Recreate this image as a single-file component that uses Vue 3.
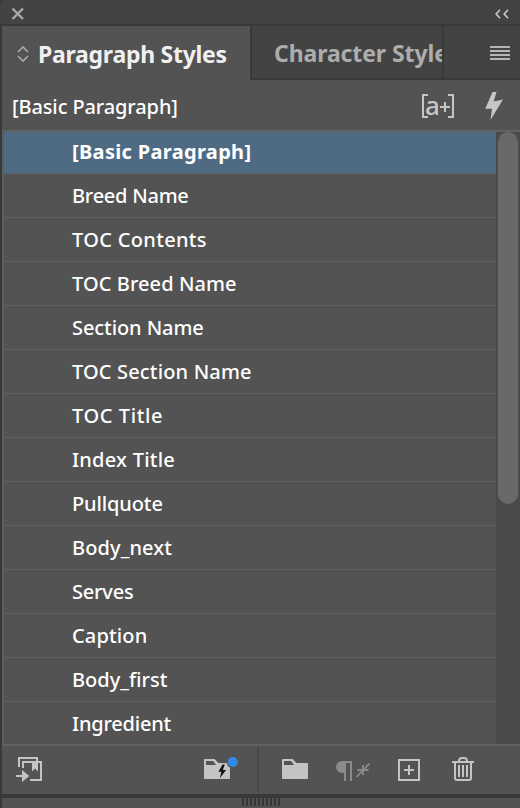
<script setup>
// Style names with their letter tracking in pixels
const styles = [
  { name: '[Basic Paragraph]', tracking: 0.33 },
  { name: 'Breed Name', tracking: -0.25 },
  { name: 'TOC Contents', tracking: 0.33 },
  { name: 'TOC Breed Name', tracking: 0.08 },
  { name: 'Section Name', tracking: -0.08 },
  { name: 'TOC Section Name', tracking: 0.16 },
  { name: 'TOC Title', tracking: 0.6 },
  { name: 'Index Title', tracking: 0.25 },
  { name: 'Pullquote', tracking: -0.12 },
  { name: 'Body_next', tracking: 0.1 },
  { name: 'Serves', tracking: -0.2 },
  { name: 'Caption', tracking: 0.15 },
  { name: 'Body_first', tracking: 0 },
  { name: 'Ingredient', tracking: -0.2 },
]
</script>

<template>
  <main class="panel">
    <header class="titlebar">
      <svg width="14" height="14" viewBox="0 0 14 14"><path d="M1.5 1.5 12 12M12 1.5 1.5 12" stroke="#aaa" stroke-width="2.4" fill="none" /></svg>
      <svg width="14" height="10" viewBox="0 0 14 10"><path d="M5 .8 1.2 5 5 9.2M13 .8 9.2 5 13 9.2" stroke="#c4c4c4" stroke-width="1.7" fill="none" /></svg>
    </header>
    <nav class="tabs">
      <div class="tab active">
        <svg class="cycle" width="12" height="18" viewBox="0 0 12 18"><path d="M1 7 6 2l5 5M1 11l5 5 5-5" stroke="#a9a9a9" stroke-width="1.6" fill="none" /></svg>
        <span>Paragraph Styles</span>
      </div>
      <div class="tab inactive"><span>Character Styles</span></div>
      <div class="menu">
        <svg width="20" height="14" viewBox="0 0 20 14"><path d="M0 1h20M0 5h20M0 9h20M0 13h20" stroke="#b5b5b5" stroke-width="2" /></svg>
      </div>
    </nav>
    <section class="current">
      <span class="current-name">[Basic Paragraph]</span>
      <div class="override">
        <svg width="32" height="24" viewBox="0 0 32 24"><path d="M6 1H1v22h5M26 1h5v22h-5M18 13h10M23 8v10" stroke="#c6c6c6" stroke-width="2" fill="none" /></svg>
        <span>a</span>
      </div>
      <svg class="bolt" width="18" height="28" viewBox="0 0 18 28"><path d="M7.5 0h4L8.7 9.5 18 7.5 5.5 28 7 16.8H.2z" fill="#c6c6c6" /></svg>
    </section>
    <section class="body">
      <ul class="list">
        <li v-for="(style, i) in styles" :key="style.name" :class="{ selected: i === 0 }" :style="{ letterSpacing: style.tracking + 'px' }">{{ style.name }}</li>
      </ul>
      <div class="track"><div class="thumb"></div></div>
    </section>
    <footer class="actions">
      <svg class="load" width="27" height="26" viewBox="0 0 27 26">
        <path d="M3 10V1h18v3M7 11V5h18v18H14" stroke="#c4c4c4" stroke-width="2" fill="none" />
        <path d="M16 5h6v9.5l-3-3-3 3zM0 18h6v-5l7.3 6L6 25v-5H0z" fill="#c4c4c4" />
      </svg>
      <svg class="sync" width="36" height="26" viewBox="0 0 36 26">
        <path d="M0 3q0-1 1-1h9.5l4 4H25q1 0 1 1v14q0 1-1 1H1q-1 0-1-1z" fill="#c4c4c4" />
        <path d="M2 4h7.2L12 8H2z" fill="#535353" />
        <path d="m18.6 7.5-4.2 7.3h3l-1.6 6.5 6.2-8.3h-3.2l2-5.5z" fill="#111" />
        <circle cx="28.8" cy="5" r="6.2" fill="#535353" />
        <circle cx="28.8" cy="5" r="5" fill="#308be8" />
      </svg>
      <i class="divider"></i>
      <svg class="folder" width="26" height="20" viewBox="0 0 26 20">
        <path d="M0 1q0-1 1-1h9.5l4 4H25q1 0 1 1v14q0 1-1 1H1q-1 0-1-1z" fill="#c4c4c4" />
        <path d="M2 2h7.2L12 6H2z" fill="#535353" />
      </svg>
      <svg class="clear" width="34" height="22" viewBox="0 0 34 22">
        <path d="M16 1v20h-2V3h-4v18H8v-8H6A6 6 0 0 1 6 1z" fill="#8b8b8b" />
        <path d="m20.5 17 13-13.5M21.5 10h11M27 5v10" stroke="#8b8b8b" stroke-width="1.8" />
      </svg>
      <svg class="add" width="22" height="22" viewBox="0 0 22 22"><path d="M1 1h20v20H1zM6 11h10M11 6v10" stroke="#c4c4c4" stroke-width="2" fill="none" /></svg>
      <svg class="trash" width="22" height="24" viewBox="0 0 22 24"><path d="M0 5h22M7 4q0-3 3-3h2q3 0 3 3M3 5v16q0 2 2 2h12q2 0 2-2V5M7 8v12M11 8v12M15 8v12" stroke="#c4c4c4" stroke-width="2" fill="none" /></svg>
    </footer>
    <div class="resize"><i v-for="n in 10" :key="n"></i></div>
  </main>
</template>

<style>
body { background: #383838; }
</style>
<style scoped>
.panel { box-sizing: border-box; width: 520px; height: 808px; padding-left: 2px; background: #535353; border-radius: 6px 0 0; box-shadow: inset 2px 0 #393939; color: #fff; font-family: "Noto Sans", sans-serif; overflow: hidden; }
svg { display: block; flex: none; }
.titlebar { box-sizing: border-box; height: 26px; margin-left: -2px; padding: 3px 11px 0; display: flex; align-items: center; justify-content: space-between; background: #434343; border-bottom: 2px solid #393939; }
.tabs { height: 54px; display: flex; background: #434343; font-size: 23px; font-weight: 700; letter-spacing: -.27px; white-space: nowrap; }
.tab { box-sizing: border-box; display: flex; align-items: center; }
.active { width: 248px; padding: 1px 0 0 15px; gap: 9px; background: #535353; color: #f0f0f0; }
.inactive { width: 192px; padding: 2px 0 0 22px; border-left: 2px solid #393939; border-bottom: 2px solid #393939; color: #adadad; letter-spacing: -.1px; overflow: hidden; }
.menu { flex: 1; display: flex; align-items: center; justify-content: flex-end; padding: 2px 10px 0 0; border-left: 2px solid #393939; border-bottom: 2px solid #393939; }
.current { height: 50px; display: flex; align-items: center; padding: 0 17px 0 10px; }
.current-name { flex: 1; padding-top: 2px; font-size: 20px; font-weight: 500; letter-spacing: -.12px; }
.override { display: grid; margin: 2px 31px 0 0; }
.override > * { grid-area: 1 / 1; }
.override span { height: 24px; padding-left: 3px; color: #c6c6c6; font-size: 26px; font-weight: 500; line-height: 23px; }
.bolt { margin-top: 1px; }
.body { height: 612px; display: flex; border-top: 2px solid #616161; border-bottom: 2px solid #616161; }
.list { flex: 1; margin: 0; padding: 0; list-style: none; border-left: 2px solid #5d5d5d; overflow: hidden; }
.list li { box-sizing: border-box; height: 44px; padding-left: 68px; border-bottom: 1px solid #616161; font-size: 20px; font-weight: 500; line-height: 43px; }
.list .selected { height: 42px; background: #4f6b84; font-weight: 700; line-height: 40px; }
.track { width: 24px; background: #4a4a4a; }
.thumb { width: 20px; height: 372px; margin-left: 2px; border-radius: 10px; background: #696969; }
.actions { height: 48px; display: flex; align-items: center; padding-left: 14px; }
.sync { margin-left: 161px; }
.divider { width: 2px; height: 46px; margin-left: 17px; background: #494949; }
.folder { margin: -2px 0 0 23px; }
.clear { margin: 2px 0 0 28px; }
.add { margin-left: 28px; }
.trash { margin: -2px 0 0 32px; }
.resize { height: 10px; border-top: 4px solid #393939; display: flex; justify-content: center; gap: 2px; }
.resize i { width: 2px; height: 8px; background: #353535; }
</style>
